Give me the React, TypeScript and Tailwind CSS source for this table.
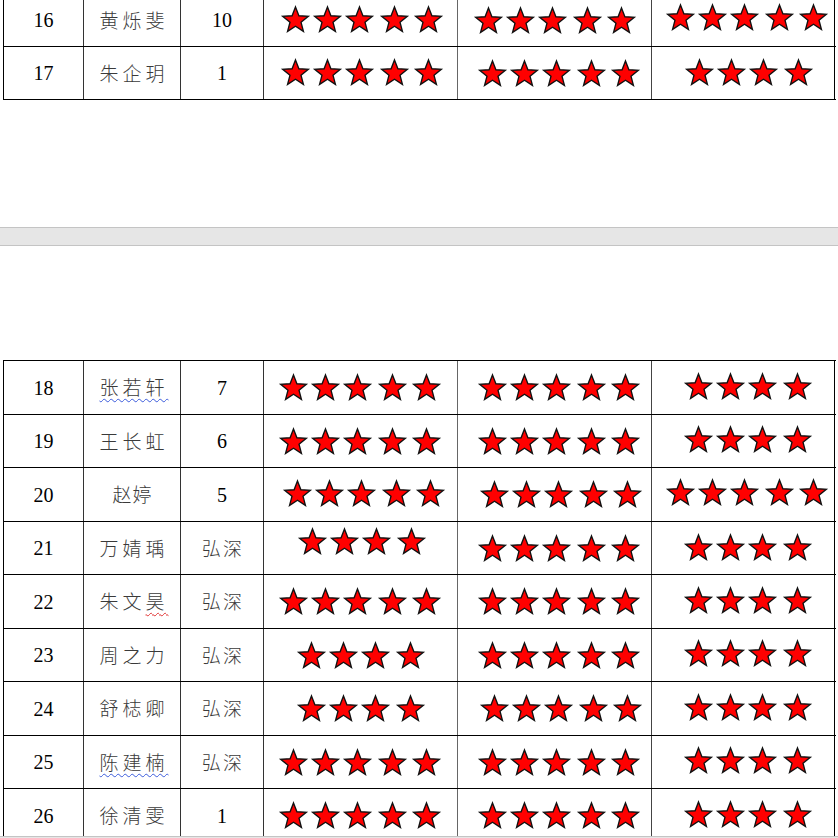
import React from 'react';

type Mark = 'blue' | 'red-last' | undefined;

interface Cell {
  n: number;
  pl: string;
  dy?: string;
}

interface Row {
  no: number;
  name: string;
  mark?: Mark;
  note: string;
  a: Cell;
  b: Cell;
  c: Cell;
  h: string;
}

const topRows: Row[] = [
  { no: 16, name: '黄烁斐', note: '10', a: { n: 5, pl: 'pl-[18px]', dy: 'mt-[-2px]' }, b: { n: 5, pl: 'pl-[17px]' }, c: { n: 5, pl: 'pl-[15px]', dy: 'mt-[-5px]' }, h: 'h-[53px]' },
  { no: 17, name: '朱企玥', note: '1', a: { n: 5, pl: 'pl-[18px]', dy: 'mt-[-2px]' }, b: { n: 5, pl: 'pl-[21px]' }, c: { n: 4, pl: 'pl-[34px]', dy: 'mt-[-1px]' }, h: 'h-[54px] border-b' },
];

const bottomRows: Row[] = [
  { no: 18, name: '张若轩', mark: 'blue', note: '7', a: { n: 5, pl: 'pl-[16px]' }, b: { n: 5, pl: 'pl-[21px]' }, c: { n: 4, pl: 'pl-[33px]', dy: 'mt-[-3px]' }, h: 'h-[54px]' },
  { no: 19, name: '王长虹', note: '6', a: { n: 5, pl: 'pl-[16px]' }, b: { n: 5, pl: 'pl-[21px]' }, c: { n: 4, pl: 'pl-[33px]', dy: 'mt-[-3px]' }, h: 'h-[53px]' },
  { no: 20, name: '赵婷', note: '5', a: { n: 5, pl: 'pl-[20px]', dy: 'mt-[-3px]' }, b: { n: 5, pl: 'pl-[23px]' }, c: { n: 5, pl: 'pl-[15px]', dy: 'mt-[-4px]' }, h: 'h-[54px]' },
  { no: 21, name: '万婧瑀', note: '弘深', a: { n: 4, pl: 'pl-[35px]', dy: 'mt-[-13px]' }, b: { n: 5, pl: 'pl-[21px]' }, c: { n: 4, pl: 'pl-[33px]', dy: 'mt-[-2px]' }, h: 'h-[53px]' },
  { no: 22, name: '朱文昊', mark: 'red-last', note: '弘深', a: { n: 5, pl: 'pl-[16px]' }, b: { n: 5, pl: 'pl-[21px]' }, c: { n: 4, pl: 'pl-[33px]', dy: 'mt-[-2px]' }, h: 'h-[54px]' },
  { no: 23, name: '周之力', note: '弘深', a: { n: 4, pl: 'pl-[34px]' }, b: { n: 5, pl: 'pl-[21px]' }, c: { n: 4, pl: 'pl-[33px]', dy: 'mt-[-3px]' }, h: 'h-[53px]' },
  { no: 24, name: '舒梽卿', note: '弘深', a: { n: 4, pl: 'pl-[34px]' }, b: { n: 5, pl: 'pl-[23px]' }, c: { n: 4, pl: 'pl-[33px]', dy: 'mt-[-3px]' }, h: 'h-[54px]' },
  { no: 25, name: '陈建楠', mark: 'blue', note: '弘深', a: { n: 5, pl: 'pl-[16px]' }, b: { n: 5, pl: 'pl-[21px]' }, c: { n: 4, pl: 'pl-[33px]', dy: 'mt-[-3px]' }, h: 'h-[53px]' },
  { no: 26, name: '徐清雯', note: '1', a: { n: 5, pl: 'pl-[16px]' }, b: { n: 5, pl: 'pl-[21px]' }, c: { n: 4, pl: 'pl-[33px]', dy: 'mt-[-3px]' }, h: 'h-[54px]' },
];

const gaps = ['', 'ml-[5px]', 'ml-[5px]', 'ml-[8px]', 'ml-[7px]'];

const Star = ({ className = '' }: { className?: string }) => (
  <svg width="27" height="27" viewBox="0 0 28 28" className={`shrink-0 overflow-visible ${className}`}>
    <polygon
      points="14,1 17.53,10.15 27.32,10.67 19.71,16.85 22.23,26.33 14,21 5.77,26.33 8.29,16.85 0.68,10.67 10.47,10.15"
      fill="#ff0000"
      stroke="#111"
      strokeWidth="1.4"
      strokeLinejoin="miter"
    />
  </svg>
);

const Stars = ({ cell }: { cell: Cell }) => (
  <div className={`flex items-center ${cell.pl} ${cell.dy ?? ''}`}>
    {Array.from({ length: cell.n }).map((_, i) => (
      <Star key={i} className={gaps[i]} />
    ))}
  </div>
);

const serif = "font-['Liberation_Serif','Times_New_Roman',serif]";
const cjk = "font-['Noto_Sans_CJK_SC',sans-serif] font-light text-[#3a3a3a] text-[19px]";

const Name = ({ name, mark }: { name: string; mark?: Mark }) => {
  const wide = name.length > 2 ? 'tracking-[4px] mr-[-4px]' : 'tracking-[1px] mr-[-1px]';
  if (mark === 'blue') {
    return (
      <span className={`${cjk} ${wide} underline decoration-wavy decoration-[#3b5bdb] decoration-1 underline-offset-[3px]`}>
        {name}
      </span>
    );
  }
  if (mark === 'red-last') {
    return (
      <span className={`${cjk} ${wide}`}>
        {name.slice(0, -1)}
        <span className="underline decoration-wavy decoration-[#e03131] decoration-1 underline-offset-[3px]">{name.slice(-1)}</span>
      </span>
    );
  }
  return <span className={`${cjk} ${wide}`}>{name}</span>;
};

const TableRow = ({ row }: { row: Row }) => (
  <div className={`grid grid-cols-[80px_97px_83px_194px_194px_184px] border-t border-black ${row.h}`}>
    <div className={`flex items-center justify-center border-l border-black ${serif} text-[20px] text-black`}>{row.no}</div>
    <div className="flex items-center justify-center border-l border-[#333]">
      <Name name={row.name} mark={row.mark} />
    </div>
    <div className="flex items-center justify-center border-l border-[#333]">
      {row.note === '弘深' ? (
        <span className={`${cjk} tracking-[2px] mr-[-2px]`}>{row.note}</span>
      ) : (
        <span className={`${serif} text-[20px] text-black`}>{row.note}</span>
      )}
    </div>
    <div className="flex items-center border-l border-[#333]">
      <Stars cell={row.a} />
    </div>
    <div className="flex items-center border-l border-[#666]">
      <Stars cell={row.b} />
    </div>
    <div className="flex items-center border-x border-l-[#444] border-r-black">
      <Stars cell={row.c} />
    </div>
  </div>
);

export default function App() {
  return (
    <div className="w-[838px] h-[838px] overflow-hidden bg-white">
      <div className="mt-[-7px] ml-[3px] w-[833px]">
        {topRows.map((r) => (
          <TableRow key={r.no} row={r} />
        ))}
      </div>
      <div className="h-[127px]" />
      <div className="h-[19px] bg-[#e6e6e6] border-y border-[#c4c4c4]" />
      <div className="h-[590px] overflow-hidden bg-white pt-[114px]">
        <div className="ml-[3px] w-[833px]">
          {bottomRows.map((r) => (
            <TableRow key={r.no} row={r} />
          ))}
        </div>
      </div>
      <div className="h-[2px] border-t border-[#c4c4c4] bg-[#e6e6e6]" />
    </div>
  );
}
